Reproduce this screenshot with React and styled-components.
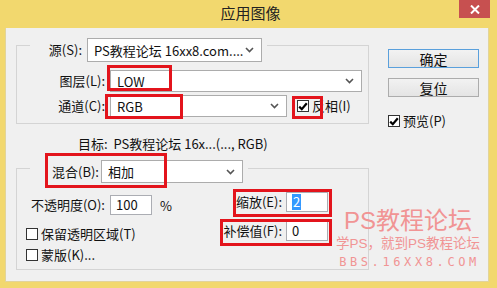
import React from "react";
import styled, { createGlobalStyle } from "styled-components";

const GlobalStyle = createGlobalStyle`
  html, body {
    margin: 0;
    padding: 0;
    background: #f2d86e;
  }
  body {
    font-family: "Noto Sans CJK SC", "Noto Sans", sans-serif;
    font-size: 13px;
    color: #111;
  }
`;

const Window = styled.div`
  position: relative;
  width: 497px;
  height: 288px;
  background: #f2d86e;
  overflow: hidden;
`;

const TitleBar = styled.div`
  height: 28px;
  display: flex;
  align-items: flex-start;
  justify-content: center;
  position: relative;
`;

const Title = styled.div`
  font-size: 15px;
  line-height: 26px;
  color: #222;
  margin-left: 4px;
`;

const CloseBtn = styled.div`
  position: absolute;
  top: 0;
  right: 7px;
  width: 31px;
  height: 18px;
  background: #c75050;
  display: flex;
  align-items: center;
  justify-content: center;
`;

const Client = styled.div`
  margin: 0 8px 0 5px;
  height: 254px;
  box-sizing: border-box;
  background: #f0f0f0;
  border: 1px solid #e2d49a;
  border-top: none;
  padding: 17px 0 0 10px;
  display: flex;
`;

const LeftCol = styled.div`
  width: 353px;
  display: flex;
  flex-direction: column;
`;

const Group = styled.div`
  border: 1px solid #d4d4d4;
  display: flex;
  flex-direction: column;
  margin-top: ${({ mt }) => mt || 0}px;
  padding-bottom: ${({ pb }) => pb}px;
`;

const Legend = styled.div`
  display: flex;
  align-items: center;
  align-self: flex-start;
  background: #f0f0f0;
  margin: ${({ mt }) => mt}px 0 0 13px;
  padding: 0 5px 0 ${({ pl }) => pl}px;
`;

const Label = styled.div`
  box-sizing: border-box;
  width: ${({ w }) => w}px;
  flex: none;
  text-align: right;
  padding-right: ${({ gap }) => (gap === undefined ? 5 : gap)}px;
  white-space: nowrap;
  line-height: 18px;
`;

const Select = styled.div`
  position: relative;
  box-sizing: border-box;
  width: ${({ w }) => (w ? `${w}px` : "auto")};
  flex: ${({ w }) => (w ? "none" : "1")};
  height: ${({ h }) => h}px;
  background: #fff;
  border: 1px solid #acacac;
  display: flex;
  align-items: center;
  padding-left: 6px;
  white-space: nowrap;
  overflow: hidden;
`;

const Chevron = styled.svg`
  position: absolute;
  right: 7px;
  top: 50%;
  margin-top: -3px;
`;

const Row = styled.div`
  display: flex;
  align-items: center;
  margin-top: ${({ mt }) => mt}px;
  padding-right: ${({ pr }) => pr || 0}px;
`;

const CheckRow = styled.div`
  display: flex;
  align-items: center;
  margin: ${({ mt }) => mt}px 0 0 ${({ ml }) => ml || 0}px;
  line-height: 16px;
  white-space: nowrap;
`;

const Box = styled.div`
  width: 12px;
  height: 12px;
  box-sizing: border-box;
  border: 1px solid #333;
  background: #fff;
  margin-right: 3px;
  display: flex;
  align-items: center;
  justify-content: center;
  flex: none;
`;

const Target = styled.div`
  margin: 11px 0 0 62px;
  line-height: 18px;
  height: 18px;
  white-space: nowrap;
`;

const Group2Body = styled.div`
  display: flex;
`;

const LeftStack = styled.div`
  width: 193px;
  display: flex;
  flex-direction: column;
`;

const RightStack = styled.div`
  display: flex;
  flex-direction: column;
  padding-top: 9px;
`;

const Input = styled.div`
  box-sizing: border-box;
  width: 42px;
  height: 20px;
  background: #fff;
  border: 1px solid #abadb3;
  display: flex;
  align-items: center;
  padding-left: 5px;
  line-height: 16px;
`;

const Selected = styled.span`
  background: #3399ff;
  color: #fff;
  padding: 0 1px;
`;

const Percent = styled.span`
  margin-left: 8px;
`;

const RightCol = styled.div`
  margin-left: 19px;
  padding-top: 4px;
  display: flex;
  flex-direction: column;
`;

const Button = styled.div`
  box-sizing: border-box;
  width: 91px;
  height: 19px;
  margin-bottom: 10px;
  border: 1px solid ${({ primary }) => (primary ? "#5aa0dc" : "#acacac")};
  background: linear-gradient(#f2f2f2, #e4e4e4);
  display: flex;
  align-items: center;
  justify-content: center;
  font-size: 14px;
  line-height: 16px;
`;

const Watermark = styled.div`
  position: absolute;
  left: 338px;
  top: 208px;
  width: 140px;
  display: flex;
  flex-direction: column;
  align-items: center;
  color: #f19494;
  font-family: "Liberation Sans", "Noto Sans CJK SC", sans-serif;
  pointer-events: none;
`;

const WmBig = styled.div`
  font-size: 24px;
  line-height: 26px;
`;

const WmMid = styled.div`
  margin-top: 2px;
  font-size: 13.5px;
  line-height: 16px;
  white-space: nowrap;
`;

const WmSmall = styled.div`
  margin: 3px 0 0 3px;
  font-family: "DejaVu Sans Mono", monospace;
  font-size: 12px;
  line-height: 14px;
  letter-spacing: 3.6px;
  white-space: nowrap;
`;

const Mark = styled.div`
  position: absolute;
  box-sizing: border-box;
  border: 3px solid #e3141c;
  left: ${({ x }) => x}px;
  top: ${({ y }) => y}px;
  width: ${({ w }) => w}px;
  height: ${({ h }) => h}px;
  pointer-events: none;
`;

const Arrow = () => (
  <Chevron width="9" height="6" viewBox="0 0 9 6">
    <polyline points="1,1 4.5,4.5 8,1" fill="none" stroke="#555" strokeWidth="1.6" />
  </Chevron>
);

const Check = ({ checked }) => (
  <Box>
    {checked && (
      <svg width="10" height="9" viewBox="0 0 10 9">
        <polyline points="1.2,4.6 3.8,7.2 8.8,1.2" fill="none" stroke="#000" strokeWidth="2.2" />
      </svg>
    )}
  </Box>
);

const marks = [
  { x: 107, y: 65, w: 65, h: 26 },
  { x: 105, y: 94, w: 78, h: 25 },
  { x: 292, y: 96, w: 31, h: 23 },
  { x: 45, y: 153, w: 122, h: 35 },
  { x: 233, y: 189, w: 99, h: 28 },
  { x: 220, y: 219, w: 112, h: 27 },
];

export default function App() {
  return (
    <>
      <GlobalStyle />
      <Window>
        <TitleBar>
          <Title>应用图像</Title>
          <CloseBtn>
            <svg width="10" height="9" viewBox="0 0 10 9">
              <path d="M1 0.5 L9 8.5 M9 0.5 L1 8.5" stroke="#fff" strokeWidth="2" />
            </svg>
          </CloseBtn>
        </TitleBar>
        <Client>
          <LeftCol>
            <Group pb={6}>
              <Legend mt={-8} pl={18}>
                <Label w={39}>源(S):</Label>
                <Select w={175} h={24}>
                  PS教程论坛 16xx8.com....
                  <Arrow />
                </Select>
              </Legend>
              <Row mt={8} pr={6}>
                <Label w={93}>图层(L):</Label>
                <Select h={22}>
                  LOW
                  <Arrow />
                </Select>
              </Row>
              <Row mt={3}>
                <Label w={93}>通道(C):</Label>
                <Select w={177} h={22}>
                  RGB
                  <Arrow />
                </Select>
                <CheckRow mt={0} ml={10}>
                  <Check checked />
                  反相(I)
                </CheckRow>
              </Row>
            </Group>
            <Target>目标:&nbsp; PS教程论坛 16x...(..., RGB)</Target>
            <Group pb={6} mt={15}>
              <Legend mt={-9} pl={22}>
                <Label w={49} gap={3}>混合(B):</Label>
                <Select w={142} h={23}>
                  相加
                  <Arrow />
                </Select>
              </Legend>
              <Group2Body>
                <LeftStack>
                  <Row mt={12}>
                    <Label w={93}>不透明度(O):</Label>
                    <Input>100</Input>
                    <Percent>%</Percent>
                  </Row>
                  <CheckRow mt={11} ml={9}>
                    <Check />
                    保留透明区域(T)
                  </CheckRow>
                  <CheckRow mt={5} ml={9}>
                    <Check />
                    蒙版(K)...
                  </CheckRow>
                </LeftStack>
                <RightStack>
                  <Row mt={0}>
                    <Label w={76} gap={4}>缩放(E):</Label>
                    <Input>
                      <Selected>2</Selected>
                    </Input>
                  </Row>
                  <Row mt={9}>
                    <Label w={76} gap={4}>补偿值(F):</Label>
                    <Input>0</Input>
                  </Row>
                </RightStack>
              </Group2Body>
            </Group>
          </LeftCol>
          <RightCol>
            <Button primary>确定</Button>
            <Button>复位</Button>
            <CheckRow mt={6}>
              <Check checked />
              预览(P)
            </CheckRow>
          </RightCol>
        </Client>
        <Watermark>
          <WmBig>PS教程论坛</WmBig>
          <WmMid>学PS，就到PS教程论坛</WmMid>
          <WmSmall>BBS.16XX8.COM</WmSmall>
        </Watermark>
        {marks.map((m, i) => (
          <Mark key={i} {...m} />
        ))}
      </Window>
    </>
  );
}
